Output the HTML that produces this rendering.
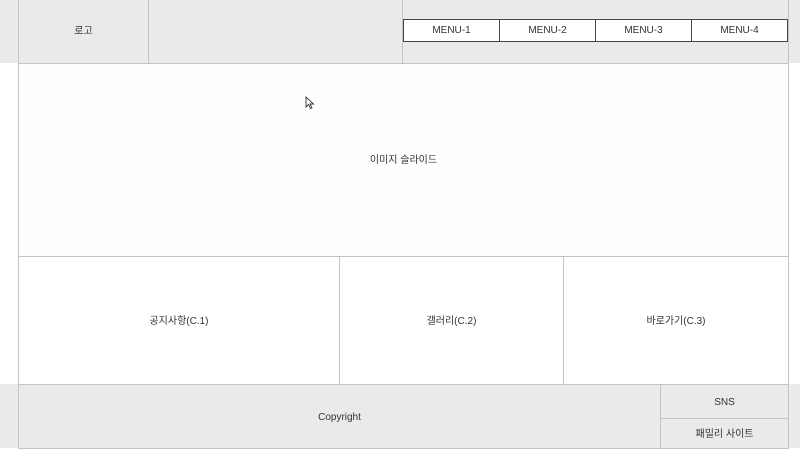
<!DOCTYPE html><html><head><meta charset="utf-8"><style>
*{box-sizing:border-box;margin:0;padding:0}
body{width:800px;height:462px;background:#fff;font-family:"Liberation Sans","Noto Sans CJK KR",sans-serif;font-size:10px;line-height:12px;color:#333;position:relative;overflow:hidden}
.a{position:absolute;display:flex;align-items:center;justify-content:center}
.bg{position:absolute;left:0;width:800px;background:#ebeaeb}
.v{position:absolute;width:1px;background:#c4c4c4}
.h{position:absolute;height:1px;background:#c4c4c4}
</style></head><body>
<div class="bg" style="top:0;height:63px"></div>
<div class="bg" style="top:384px;height:64px"></div>
<div class="a" style="left:18px;top:0;width:131px;height:63px">로고</div>
<div class="a" style="left:403px;top:19px;width:97px;height:23px;border:1px solid #444;background:#fff">MENU-1</div>
<div class="a" style="left:499px;top:19px;width:97px;height:23px;border:1px solid #444;background:#fff">MENU-2</div>
<div class="a" style="left:595px;top:19px;width:97px;height:23px;border:1px solid #444;background:#fff">MENU-3</div>
<div class="a" style="left:691px;top:19px;width:97px;height:23px;border:1px solid #444;background:#fff">MENU-4</div>
<div class="a" style="left:18px;top:64px;width:771px;height:192px;background:#fefefe;padding-top:2px">이미지 슬라이드</div>
<div class="a" style="left:18px;top:257px;width:322px;height:127px;padding-top:2px">공지사항(C.1)</div>
<div class="a" style="left:339px;top:257px;width:225px;height:127px;padding-top:2px">갤러리(C.2)</div>
<div class="a" style="left:563px;top:257px;width:226px;height:127px;padding-top:2px">바로가기(C.3)</div>
<div class="a" style="left:18px;top:384px;width:643px;height:65px;padding-top:2px">Copyright</div>
<div class="a" style="left:660px;top:384px;width:129px;height:35px;padding-top:2px">SNS</div>
<div class="a" style="left:660px;top:418px;width:129px;height:31px;padding-top:2px">패밀리 사이트</div>
<!-- lines -->
<div class="v" style="left:18px;top:0;height:449px"></div>
<div class="v" style="left:788px;top:0;height:449px"></div>
<div class="v" style="left:148px;top:0;height:63px"></div>
<div class="v" style="left:402px;top:0;height:63px"></div>
<div class="h" style="left:18px;top:63px;width:771px"></div>
<div class="h" style="left:18px;top:256px;width:771px"></div>
<div class="h" style="left:18px;top:384px;width:771px"></div>
<div class="v" style="left:339px;top:256px;height:128px"></div>
<div class="v" style="left:563px;top:256px;height:128px"></div>
<div class="v" style="left:660px;top:384px;height:65px"></div>
<div class="h" style="left:660px;top:418px;width:129px"></div>
<div class="h" style="left:18px;top:448px;width:771px"></div>
<svg style="position:absolute;left:305px;top:96px" width="10" height="14" viewBox="0 0 10 14"><path d="M1 1 L1 11 L3.5 8.5 L5.5 12.5 L7 11.8 L5 8 L8.5 8 Z" fill="#fff" stroke="#333" stroke-width="0.9"/></svg>
</body></html>
